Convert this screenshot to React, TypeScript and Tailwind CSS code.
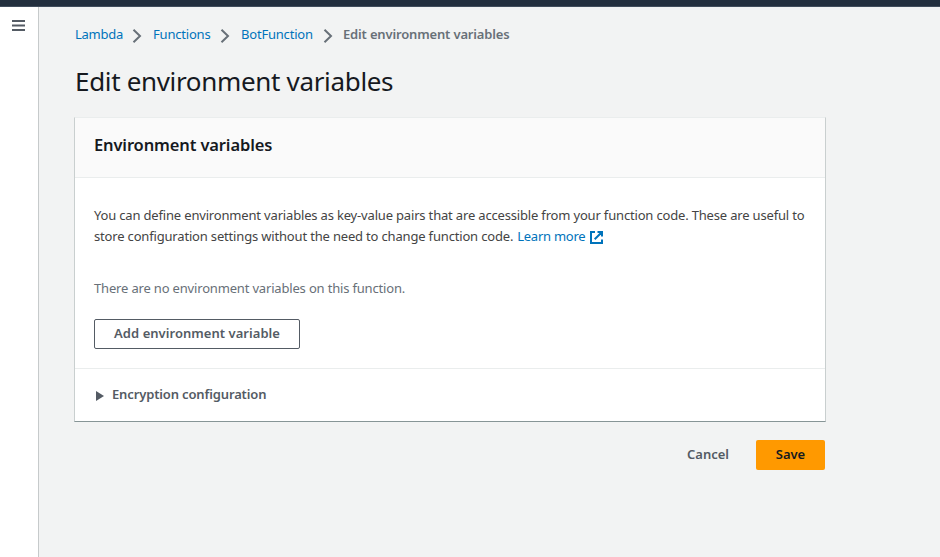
const links = [
  { label: "Lambda", box: "w-[48px]", text: "tracking-[-0.25px]" },
  { label: "Functions", box: "w-[58px]", text: "tracking-[-0.2px]" },
  { label: "BotFunction", box: "w-[73px]", text: "tracking-[-0.2px]" },
];

function Chevron() {
  return (
    <svg className="ml-[9px] mr-[11px] mt-[2px] h-4 w-[10px] shrink-0" viewBox="0 0 10 16" fill="none" stroke="#687078" strokeWidth="2">
      <path d="M1.5 1.7 8 8 1.5 14.3" />
    </svg>
  );
}

function ExternalIcon() {
  return (
    <svg className="ml-[5px] mt-[2px] h-[13px] w-[13px] shrink-0" viewBox="0 0 13 13" fill="none" stroke="#0073bb" strokeWidth="2">
      <path d="M5 1H1v11h11V8.5M7.5 1H12v4.5M12 1 4.7 8.3" />
    </svg>
  );
}

export default function App() {
  return (
    <div className="flex h-[557px] w-[940px] flex-col overflow-hidden bg-[#f2f3f3] font-['Noto_Sans',sans-serif] text-[13px] text-[#16191f]">
      <header className="h-[7px] shrink-0 border-b border-[#414d5c] bg-[#232f3e]" />
      <div className="flex grow">
        <aside className="w-[39px] shrink-0 border-r border-[#c6cacb] bg-white pl-3 pt-[13px]">
          <svg className="h-[11px] w-[13px]" viewBox="0 0 13 11" fill="#545b64">
            <path d="M0 0h13v2H0zM0 4.5h13v2H0zM0 9h13v2H0z" />
          </svg>
        </aside>
        <main className="ml-[36px] flex w-[750px] flex-col">
          <nav className="mt-[17px] flex h-[22px] items-center whitespace-nowrap text-[#0073bb]">
            {links.map((l) => (
              <div key={l.label} className="flex items-center">
                <a className={`${l.box} ${l.text}`}>{l.label}</a>
                <Chevron />
              </div>
            ))}
            <span className="-ml-px font-semibold tracking-[-0.16px] text-[#687078]">Edit environment variables</span>
          </nav>
          <h1 className="mt-[17px] h-9 whitespace-nowrap text-[26px] leading-9 tracking-[-0.33px]">Edit environment variables</h1>
          <section className="-mx-px mt-[18px] h-[305px] w-[752px] border-x border-b border-t border-x-[#c9cfcf] border-b-[#879596] border-t-[#eaeded] bg-white">
            <div className="h-[60px] border-b border-[#eaeded] bg-[#fafafa] px-[19px] pt-[15px]">
              <h2 className="h-6 text-[16.5px] font-semibold leading-6 tracking-[-0.13px]">Environment variables</h2>
            </div>
            <div className="h-[191px] whitespace-nowrap border-b border-[#eaeded] px-[19px] pt-[27px] leading-[21px] tracking-[-0.173px] text-[#444]">
              <p className="h-[21px]">You can define environment variables as key-value pairs that are accessible from your function code. These are useful to</p>
              <p className="flex h-[21px] items-center">
                <span>store configuration settings without the need to change function code.</span>
                <a className="ml-1 tracking-[-0.25px] text-[#0073bb]">Learn more</a>
                <ExternalIcon />
              </p>
              <p className="mt-[31px] h-[21px] text-[#687078]">There are no environment variables on this function.</p>
              <button className="mt-[20px] flex h-[30px] w-[206px] items-center justify-center rounded-[2px] border border-[#545b64] pb-[2px] font-semibold tracking-[0.04px] text-[#545b64]">Add environment variable</button>
            </div>
            <div className="flex h-[52px] items-center px-[19px] font-semibold tracking-[-0.14px] text-[#545b64]">
              <svg className="ml-[2px] mr-2 mt-px h-[10px] w-2" viewBox="0 0 8 10" fill="#545b64"><path d="M0 0 8 5 0 10Z" /></svg>
              <span>Encryption configuration</span>
            </div>
          </section>
          <div className="mt-[18px] flex h-[30px] items-center justify-end font-semibold">
            <button className="mr-[27px] text-[#545b64]">Cancel</button>
            <button className="h-[30px] w-[69px] rounded-[2px] bg-[#ff9900]">Save</button>
          </div>
        </main>
      </div>
    </div>
  );
}
